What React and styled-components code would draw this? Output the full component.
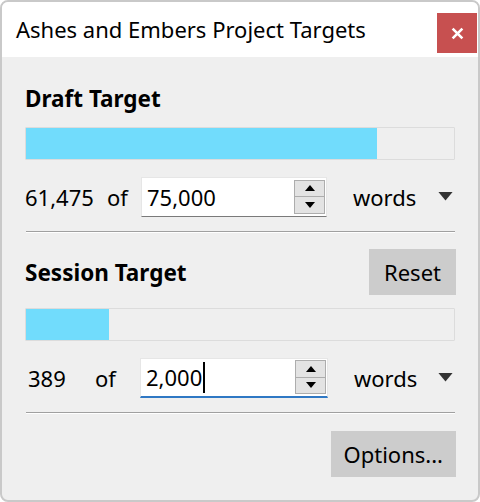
import React from "react";
import styled, { createGlobalStyle } from "styled-components";

const GlobalStyle = createGlobalStyle`
  html, body {
    margin: 0;
    padding: 0;
    background: #ffffff;
  }
  body {
    font-family: "Noto Sans", "Open Sans", sans-serif;
    color: #000000;
  }
`;

const Window = styled.div`
  width: 480px;
  height: 502px;
  box-sizing: border-box;
  border: 2px solid #c9c9c9;
  border-radius: 8px;
  overflow: hidden;
  display: flex;
  flex-direction: column;
  background: #efefef;
`;

const TitleBar = styled.div`
  height: 55px;
  flex-shrink: 0;
  background: #ffffff;
  display: flex;
  justify-content: space-between;
  align-items: flex-start;
  padding-left: 14px;
`;

const TitleText = styled.div`
  font-size: 22px;
  line-height: 55px;
`;

const CloseButton = styled.div`
  width: 40px;
  height: 40px;
  margin-top: 11px;
  margin-right: 1px;
  background: #c75050;
  color: #ffffff;
  display: flex;
  align-items: center;
  justify-content: center;
`;

const Body = styled.div`
  flex: 1;
  padding: 0 23px;
  display: flex;
  flex-direction: column;
`;

const HeadingRow = styled.div`
  height: ${(p) => p.h}px;
  margin-top: ${(p) => p.top}px;
  display: flex;
  align-items: center;
  justify-content: space-between;
`;

const Heading = styled.div`
  font-size: 22.5px;
  font-weight: 700;
`;

const Button = styled.div`
  height: 46px;
  padding: 0 ${(p) => p.pad}px;
  margin-right: -1px;
  background: #cccccc;
  font-size: 22px;
  display: flex;
  align-items: center;
  justify-content: center;
  box-sizing: border-box;
`;

const Track = styled.div`
  height: 33px;
  margin-top: ${(p) => p.top}px;
  box-sizing: border-box;
  border: 1px solid #dcdcdc;
  background: #efefef;
  border-radius: 1px;
`;

const Fill = styled.div`
  height: 100%;
  background: #71dcfc;
`;

const ValueRow = styled.div`
  height: 41px;
  margin-top: ${(p) => p.top}px;
  display: flex;
  align-items: center;
  font-size: 22px;
`;

const Count = styled.div`
  width: ${(p) => p.w}px;
  padding-left: ${(p) => p.pl}px;
  box-sizing: border-box;
  flex-shrink: 0;
`;

const Of = styled.div`
  width: ${(p) => p.w}px;
  flex-shrink: 0;
`;

const SpinBox = styled.div`
  width: ${(p) => p.w}px;
  height: 40px;
  box-sizing: border-box;
  flex-shrink: 0;
  background: #ffffff;
  border: 1px solid #e6e6e6;
  border-bottom: ${(p) => (p.focused ? "2px solid #2f78c4" : "1px solid #7a7a7a")};
  display: flex;
  align-items: center;
  padding: 0 1px 0 5px;
`;

const SpinText = styled.div`
  flex: 1;
  display: flex;
  align-items: center;
  font-size: 22px;
`;

const Caret = styled.span`
  display: inline-block;
  width: 2px;
  height: 31px;
  background: #000000;
  margin-left: 1px;
`;

const Arrows = styled.div`
  width: 31px;
  height: 34px;
  display: flex;
  flex-direction: column;
`;

const ArrowButton = styled.div`
  flex: 1;
  box-sizing: border-box;
  background: #e3e3e3;
  border: 1px solid #adadad;
  border-top-width: ${(p) => (p.down ? 0 : 1)}px;
  display: flex;
  align-items: center;
  justify-content: center;
`;

const Unit = styled.div`
  margin-left: 26px;
  flex: 1;
  display: flex;
  align-items: center;
  justify-content: space-between;
  padding-right: 2px;
`;

const Separator = styled.div`
  height: 1px;
  margin: ${(p) => p.top}px 0 0 1px;
  background: #a0a0a0;
  box-shadow: 0 1px 0 #ffffff;
`;

const Footer = styled.div`
  margin-top: 18px;
  display: flex;
  justify-content: flex-end;
`;

function Triangle({ up, size = 10, color = "#000" }) {
  return (
    <svg width={size} height={size / 2 + 1} viewBox="0 0 10 6">
      <polygon points={up ? "0,6 10,6 5,0" : "0,0 10,0 5,6"} fill={color} />
    </svg>
  );
}

function Spinner({ value, width, focused }) {
  return (
    <SpinBox w={width} focused={focused}>
      <SpinText>
        {value}
        {focused && <Caret />}
      </SpinText>
      <Arrows>
        <ArrowButton>
          <Triangle up size={10} />
        </ArrowButton>
        <ArrowButton down>
          <Triangle size={10} />
        </ArrowButton>
      </Arrows>
    </SpinBox>
  );
}

function Progress({ value, max, top }) {
  return (
    <Track top={top}>
      <Fill style={{ width: `${(value / max) * 100}%` }} />
    </Track>
  );
}

export default function App() {
  return (
    <>
      <GlobalStyle />
      <Window>
        <TitleBar>
          <TitleText>Ashes and Embers Project Targets</TitleText>
          <CloseButton>
            <svg width="13" height="13" viewBox="0 0 12 12">
              <path d="M1.5 1.5 L10.5 10.5 M10.5 1.5 L1.5 10.5" stroke="#fff" strokeWidth="2.4" />
            </svg>
          </CloseButton>
        </TitleBar>
        <Body>
          <HeadingRow h={36} top={23}>
            <Heading>Draft Target</Heading>
          </HeadingRow>
          <Progress value={61475} max={75000} top={11} />
          <ValueRow top={16}>
            <Count w={82} pl={0}>61,475</Count>
            <Of w={34}>of</Of>
            <Spinner value="75,000" width={186} />
            <Unit>
              words
              <Triangle size={15} color="#333" />
            </Unit>
          </ValueRow>
          <Separator top={14} />
          <HeadingRow h={46} top={17}>
            <Heading>Session Target</Heading>
            <Button pad={15}>Reset</Button>
          </HeadingRow>
          <Progress value={389} max={2000} top={13} />
          <ValueRow top={16}>
            <Count w={70} pl={3}>389</Count>
            <Of w={45}>of</Of>
            <Spinner value="2,000" width={188} focused />
            <Unit>
              words
              <Triangle size={15} color="#333" />
            </Unit>
          </ValueRow>
          <Separator top={14} />
          <Footer>
            <Button pad={13}>Options...</Button>
          </Footer>
        </Body>
      </Window>
    </>
  );
}
